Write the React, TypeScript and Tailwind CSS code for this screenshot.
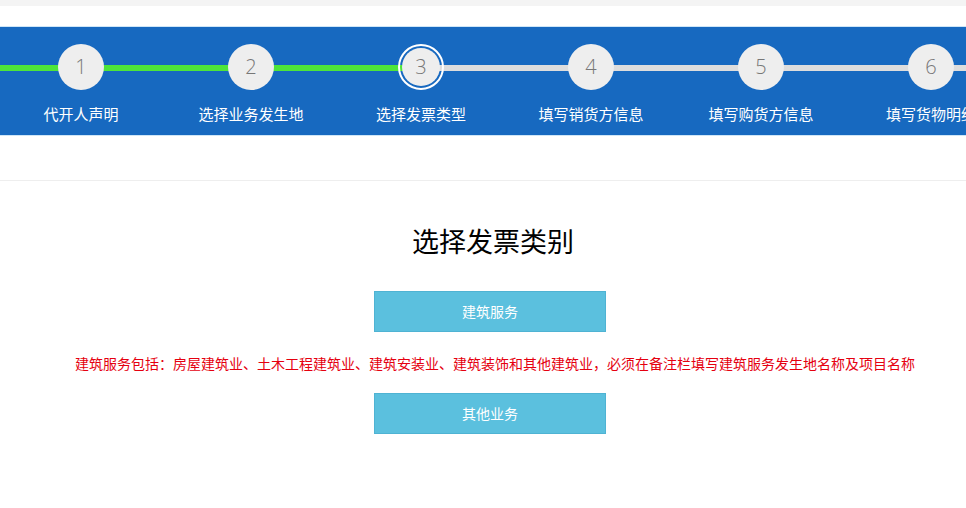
import React from "react";

const steps = [
  { n: 1, label: "代开人声明", left: "g", right: "g" },
  { n: 2, label: "选择业务发生地", left: "g", right: "g" },
  { n: 3, label: "选择发票类型", left: "g", right: "x", active: true },
  { n: 4, label: "填写销货方信息", left: "x", right: "x" },
  { n: 5, label: "填写购货方信息", left: "x", right: "x" },
  { n: 6, label: "填写货物明细", left: "x", right: "x" },
];

export default function App() {
  return (
    <div
      className="w-[966px] h-[508px] overflow-hidden bg-white"
      style={{ fontFamily: '"Open Sans", "Noto Sans CJK SC", sans-serif' }}
    >
      <div className="h-[6px] bg-[#f4f4f4]" />
      <div className="h-[20px]" />
      <div className="h-[110px] bg-[#1769c0] border-t border-b border-[#cfe6f7] overflow-hidden">
        <div className="flex -ml-[4px] pt-[17px]">
          {steps.map((s) => (
            <div key={s.n} className="relative w-[170px] shrink-0 flex flex-col items-center">
              <div
                className={
                  "absolute left-0 w-1/2 top-[21px] h-[6px] " +
                  (s.left === "g" ? "bg-[#4ee53a]" : "bg-[#dddddd]")
                }
              />
              <div
                className={
                  "absolute right-0 w-1/2 top-[21px] h-[6px] " +
                  (s.right === "g" ? "bg-[#4ee53a]" : "bg-[#dddddd]")
                }
              />
              {s.active ? (
                <div className="relative w-[46px] h-[46px] rounded-full border-2 border-white flex items-center justify-center">
                  <div className="w-[38px] h-[38px] rounded-full bg-[#eeeeee] flex items-center justify-center text-[20px] font-light text-[#777]">
                    {s.n}
                  </div>
                </div>
              ) : (
                <div className="relative w-[46px] h-[46px] rounded-full bg-[#eeeeee] flex items-center justify-center text-[20px] font-light text-[#777]">
                  {s.n}
                </div>
              )}
              <div className="mt-[14px] text-[15px] leading-[20px] text-white whitespace-nowrap">
                {s.label}
              </div>
            </div>
          ))}
        </div>
      </div>
      <div className="h-[44px]" />
      <div className="border-t border-[#eeeeee] w-[980px] flex flex-col items-center">
        <h1 className="mt-[44px] ml-[6px] text-[27px] leading-[34px] text-black font-normal">选择发票类别</h1>
        <button className="mt-[32px] w-[232px] h-[41px] bg-[#5bc0de] border border-[#4fb3d3] text-white text-[14px]">
          建筑服务
        </button>
        <p className="mt-[22px] ml-[10px] text-[14px] leading-[20px] text-[#e5000f]">
          建筑服务包括：房屋建筑业、土木工程建筑业、建筑安装业、建筑装饰和其他建筑业，必须在备注栏填写建筑服务发生地名称及项目名称
        </p>
        <button className="mt-[19px] w-[232px] h-[41px] bg-[#5bc0de] border border-[#4fb3d3] text-white text-[14px]">
          其他业务
        </button>
      </div>
    </div>
  );
}
